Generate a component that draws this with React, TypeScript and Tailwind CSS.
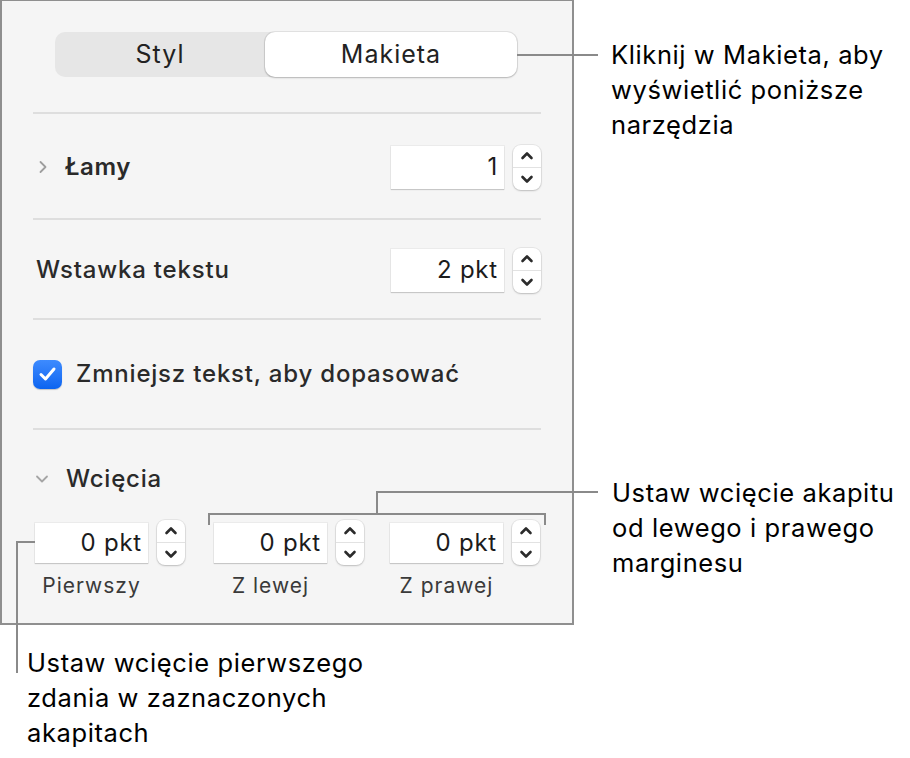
import React from "react";

const font = { fontFamily: "Inter, 'Noto Sans', sans-serif" };

function Stepper() {
  return (
    <div className="flex h-[45px] w-[28px] flex-col items-center justify-between rounded-[8px] bg-white py-[6px] shadow-[0_0_0_1px_rgba(0,0,0,0.06),0_1px_2px_rgba(0,0,0,0.18)]">
      <svg width="14" height="9" viewBox="0 0 14 9" fill="none">
        <path d="M2.5 7 L7 2.5 L11.5 7" stroke="#2b2b2b" strokeWidth="2.6" strokeLinecap="round" strokeLinejoin="round" />
      </svg>
      <div className="h-px w-full bg-[#e2e2e2]" />
      <svg width="14" height="9" viewBox="0 0 14 9" fill="none">
        <path d="M2.5 2 L7 6.5 L11.5 2" stroke="#2b2b2b" strokeWidth="2.6" strokeLinecap="round" strokeLinejoin="round" />
      </svg>
    </div>
  );
}

function NumberField({ value, h = "h-[43px]" }: { value: string; h?: string }) {
  return (
    <div className="flex items-center gap-[9px]">
      <div
        className={`flex ${h} w-[113px] items-center justify-end bg-white pr-[6px] text-[24px] tracking-[0.8px] text-[#1c1c1c] shadow-[0_0_0_1px_rgba(0,0,0,0.04),0_1px_1px_rgba(0,0,0,0.15)]`}
      >
        {value}
      </div>
      <Stepper />
    </div>
  );
}

function Divider() {
  return <div className="h-[2px] w-full bg-[#dedede]" />;
}

export default function App() {
  return (
    <div className="relative h-[758px] w-[910px] bg-white" style={font}>
      {/* panel */}
      <div className="h-[625px] w-[574px] border-x-2 border-b-2 border-t border-[#8f8f8f] bg-[#f5f5f5] px-[31px]">
        <div className="pt-[31px]">
          <div className="ml-[22px] flex h-[45px] w-[462px] rounded-[10px] bg-[#e6e6e6] text-[25px] tracking-[1px] text-[#222]">
            <div className="flex w-[210px] items-center justify-center">Styl</div>
            <div className="flex flex-1 items-center justify-center rounded-[10px] bg-white shadow-[0_0_0_1px_rgba(0,0,0,0.08),0_1px_2px_rgba(0,0,0,0.2)]">
              Makieta
            </div>
          </div>
        </div>
        <div className="mt-[35px]">
          <Divider />
        </div>

        <div className="flex h-[104px] items-center pt-[2px]">
          <svg width="10" height="14" viewBox="0 0 10 14" className="ml-[5px]" fill="none">
            <path d="M2.5 2 L7.5 7 L2.5 12" stroke="#9e9e9e" strokeWidth="1.8" strokeLinecap="round" strokeLinejoin="round" />
          </svg>
          <span className="ml-[17px] text-[24px] font-semibold tracking-[0.6px] text-[#2a2a2a]">Łamy</span>
          <div className="ml-auto">
            <NumberField value="1" />
          </div>
        </div>
        <Divider />

        <div className="flex h-[98px] items-center pt-[2px]">
          <span className="ml-[3px] text-[24px] font-medium tracking-[0.8px] text-[#2a2a2a]">Wstawka tekstu</span>
          <div className="ml-auto">
            <NumberField value="2 pkt" />
          </div>
        </div>
        <Divider />

        <div className="flex h-[108px] items-center">
          <div className="flex h-[29px] w-[29px] items-center justify-center rounded-[7px] bg-gradient-to-b from-[#3d8bff] to-[#0a64f0] shadow-[0_1px_1px_rgba(0,0,0,0.2)]">
            <svg width="19" height="16" viewBox="0 0 19 16" fill="none">
              <path d="M3 8.5 L7.5 13 L16 3" stroke="white" strokeWidth="3" strokeLinecap="round" strokeLinejoin="round" />
            </svg>
          </div>
          <span className="ml-[14px] text-[24px] font-medium tracking-[0.8px] text-[#2a2a2a]">Zmniejsz tekst, aby dopasować</span>
        </div>
        <Divider />

        <div className="mt-[28px] flex h-[42px] items-center">
          <svg width="14" height="10" viewBox="0 0 14 10" className="ml-[2px]" fill="none">
            <path d="M2 2.5 L7 7.5 L12 2.5" stroke="#a5a5a5" strokeWidth="1.8" strokeLinecap="round" strokeLinejoin="round" />
          </svg>
          <span className="ml-[17px] text-[24px] font-medium tracking-[0.8px] text-[#2a2a2a]">Wcięcia</span>
        </div>

        <div className="mt-[20px] flex items-center">
          {[
            { label: "Pierwszy", ml: "ml-[2px]" },
            { label: "Z lewej", ml: "ml-[29px]" },
            { label: "Z prawej", ml: "ml-[26px]" },
          ].map((g) => (
            <div key={g.label} className={`${g.ml} flex flex-col`}>
              <NumberField value="0 pkt" h="h-[40px]" />
              <div className="mt-[8px] w-[113px] text-center text-[21px] leading-[26px] tracking-[1px] text-[#3a3a3a]">{g.label}</div>
            </div>
          ))}
        </div>
      </div>

      {/* callout 1 */}
      <div className="absolute left-[517px] top-[54px] h-[2px] w-[81px] bg-[#8a8a8a]" />
      <div className="absolute left-[611px] top-[37px] text-[25.5px] leading-[35px] tracking-[0.6px] text-black">
        Kliknij w Makieta, aby
        <br />
        wyświetlić poniższe
        <br />
        narzędzia
      </div>

      {/* callout 2 bracket */}
      <div className="absolute left-[208px] top-[513px] h-[12px] w-[338px] border-x-2 border-t-2 border-[#8a8a8a]" />
      <div className="absolute left-[376px] top-[491px] h-[23px] w-[2px] bg-[#8a8a8a]" />
      <div className="absolute left-[376px] top-[491px] h-[2px] w-[222px] bg-[#8a8a8a]" />
      <div className="absolute left-[612px] top-[475px] text-[25.5px] leading-[35px] tracking-[0.6px] text-black">
        Ustaw wcięcie akapitu
        <br />
        od lewego i prawego
        <br />
        marginesu
      </div>

      {/* callout 3 */}
      <div className="absolute left-[16px] top-[541px] h-[132px] w-[19px] border-l-2 border-t-2 border-[#8a8a8a]" />
      <div className="absolute left-[27px] top-[645px] text-[25.5px] leading-[35px] tracking-[0.6px] text-black">
        Ustaw wcięcie pierwszego
        <br />
        zdania w zaznaczonych
        <br />
        akapitach
      </div>
    </div>
  );
}
